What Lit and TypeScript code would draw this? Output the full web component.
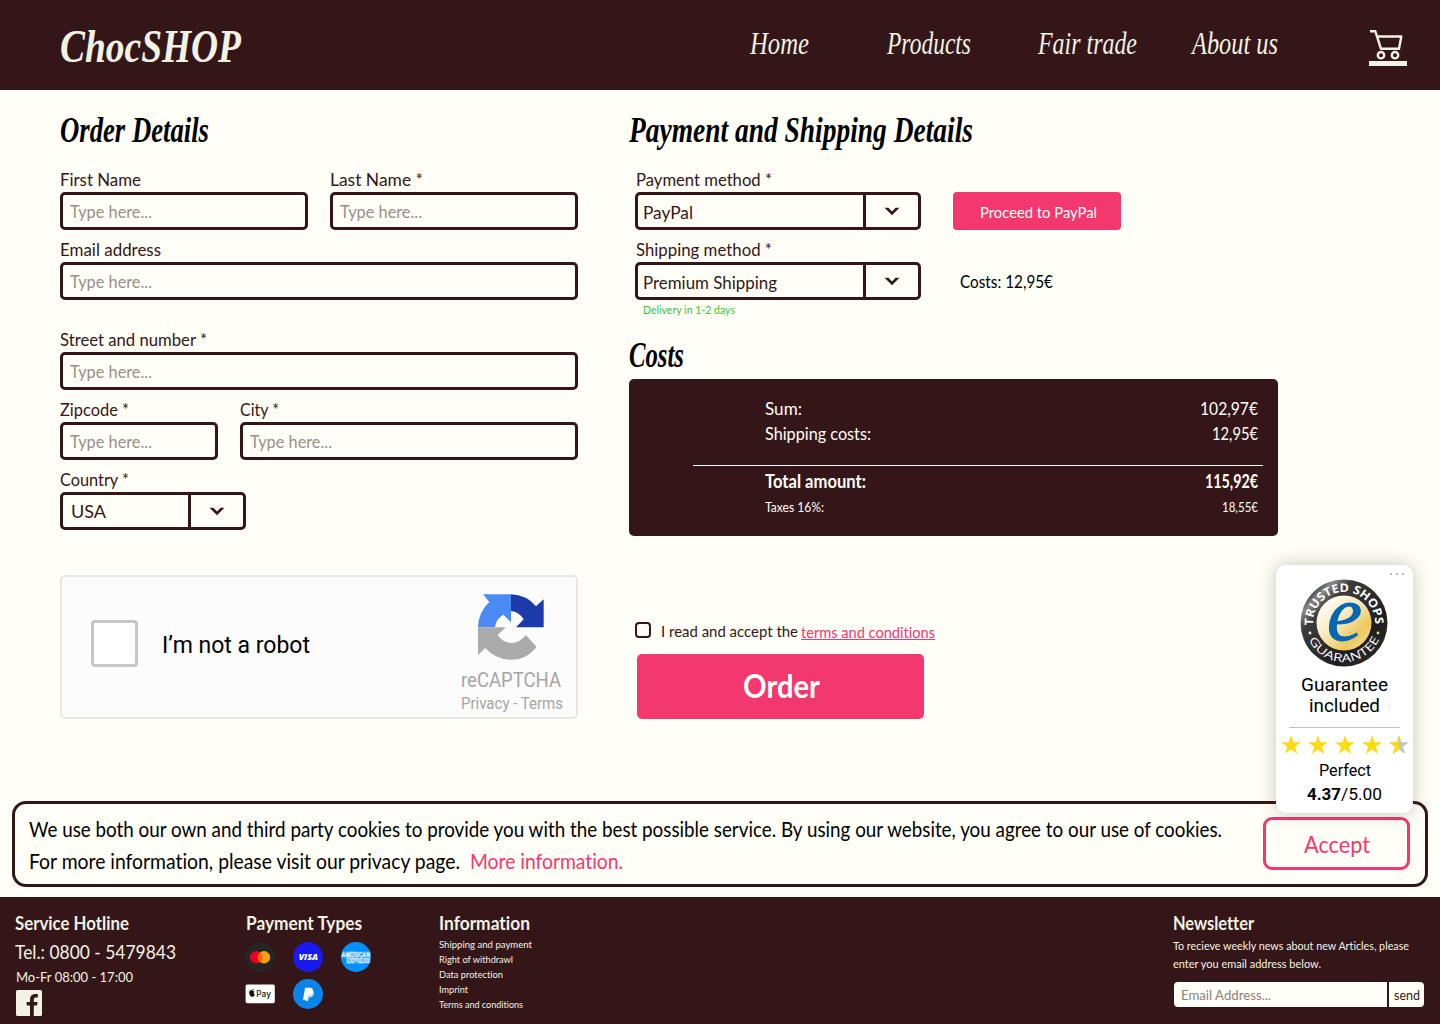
import { LitElement, html, css, svg } from "lit";
import { customElement, property, query } from "lit/decorators.js";
import { styleMap } from "lit/directives/style-map.js";

/** One line of text, set to a given measure. */
@customElement("fit-text")
class FitText extends LitElement {
  @property() text = "";
  @property({ type: Number }) measure = 0;
  @query("span") private line!: HTMLSpanElement;

  static styles = css`
    :host { display: block; flex: none; font-variant-ligatures: none; }
    span { display: inline-block; white-space: pre; transform-origin: 0 50%; vertical-align: top; }
  `;

  protected updated() {
    this.style.width = `${this.measure}px`;
    const natural = this.line.getBoundingClientRect().width;
    if (natural && this.line.style.transform === "") {
      this.line.style.transform = `scaleX(${this.measure / natural})`;
    }
  }

  render() {
    return html`<span>${this.text}</span>`;
  }
}

const fit = (text: string, measure: number, cls = "") =>
  html`<fit-text class=${cls} .text=${text} .measure=${measure}></fit-text>`;

const chevron = html`<svg class="chevron" width="16" height="9" viewBox="0 0 16 9">
  <path d="M.6.8H4.4L8 4.6 11.6.8h3.8L8 8.2z" fill="#341618" />
</svg>`;

@customElement("shop-field")
class ShopField extends LitElement {
  @property() label = "";
  @property({ type: Number }) labelWidth = 0;
  @property() value = "Type here...";
  @property({ type: Number }) valueWidth = 82;
  @property({ type: Boolean }) select = false;
  @property({ type: Boolean }) inset = false;

  static styles = css`
    :host { display: block; font: 18px/26px Lato, sans-serif; color: #341618; }
    .label { padding-top: 2px; }
    .shifted { padding-left: 1px; }
    .box { box-sizing: border-box; height: 38px; border: 3px solid #341618; border-radius: 5px; display: flex; line-height: 32px; }
    .value { flex: 1; padding-left: 7px; }
    .hint { color: #9c8d89; }
    .chosen { line-height: 33px; padding-left: 8px; }
    .tight { padding-left: 5px; line-height: 34px; }
    .arrow { box-sizing: border-box; width: 55px; border-left: 3px solid #341618; display: flex; align-items: center; justify-content: center; }
  `;

  render() {
    const kind = !this.select ? "hint" : this.inset ? "chosen" : "tight";
    return html`
      ${fit(this.label, this.labelWidth, kind === "tight" ? "label shifted" : "label")}
      <div class="box">
        <div class="value ${kind}">${fit(this.value, this.valueWidth)}</div>
        ${this.select ? html`<div class="arrow">${chevron}</div>` : ""}
      </div>`;
  }
}

const field = (label: string, labelWidth: number, cls = "") =>
  html`<shop-field class=${cls} .label=${label} .labelWidth=${labelWidth}></shop-field>`;

const select = (label: string, labelWidth: number, value: string, valueWidth: number, cls = "", inset = false) =>
  html`<shop-field class=${cls} select .label=${label} .labelWidth=${labelWidth}
    .value=${value} .valueWidth=${valueWidth} .inset=${inset}></shop-field>`;

const starPoints = "10,0 12.4,7.2 20,7.3 13.9,11.8 16.2,19 10,14.6 3.8,19 6.1,11.8 0,7.3 7.6,7.2";

@customElement("trust-card")
class TrustCard extends LitElement {
  static styles = css`
    :host { display: flex; flex-direction: column; align-items: center; box-sizing: border-box; width: 137px; height: 248px;
      background: #fff; border-radius: 10px; box-shadow: 0 0 18px rgba(60, 60, 40, .3); font: 19px/21px Roboto, sans-serif; color: #000; }
    .dots { align-self: flex-end; display: flex; gap: 4px; padding: 8px 9px 4px 0; }
    .dots i { width: 2px; height: 2px; background: #bbb; }
    .seal { display: block; overflow: visible; margin-right: 1px; }
    .name { display: flex; flex-direction: column; align-items: center; padding-top: 7px; }
    .rule { width: 111px; height: 1px; background: #bdbdbd; margin-top: 11px; }
    .stars { display: flex; gap: 7px; padding-top: 7px; }
    .small { font-size: 16px; line-height: 24px; }
    .first { padding: 4px 0 0 1px; }
    .score { display: flex; font-size: 17px; line-height: 23px; }
    .bold { font-weight: 700; }
  `;

  render() {
    return html`
      <div class="dots"><i></i><i></i><i></i></div>
      <svg class="seal" width="88" height="88" viewBox="-44 -44 88 88">
        <defs>
          <linearGradient id="rim" x1="0" y1="0" x2="1" y2="1">
            <stop offset="0" stop-color="#222" /><stop offset=".13" stop-color="#3a3a3a" />
            <stop offset=".2" stop-color="#8a8a8a" /><stop offset=".3" stop-color="#3c3c3c" />
            <stop offset=".7" stop-color="#1d1d1f" /><stop offset="1" stop-color="#333" />
          </linearGradient>
          <linearGradient id="gold" x1=".1" y1=".1" x2=".9" y2=".9">
            <stop offset="0" stop-color="#fff" /><stop offset=".4" stop-color="#fbeac0" />
            <stop offset=".8" stop-color="#eec75c" /><stop offset="1" stop-color="#f5dc95" />
          </linearGradient>
          <path id="upper" d="M-30.9 2.4A31 31 0 1 1 30.9 2.4" />
          <path id="lower" d="M-36.3 14A38.9 38.9 0 0 0 36.3 14" />
        </defs>
        <circle r="43.5" fill="url(#rim)" />
        <circle r="27.5" fill="url(#gold)" />
        <g fill="#fff" font-family="Open Sans, sans-serif">
          <text font-size="11.8" font-weight="700"><textPath href="#upper" textLength="101" lengthAdjust="spacingAndGlyphs">TRUSTED SHOPS</textPath></text>
          <text font-size="11.4"><textPath href="#lower" startOffset="3" textLength="88" lengthAdjust="spacingAndGlyphs">GUARANTEE</textPath></text>
        </g>
        <circle cx="-34" cy="10" r="1.4" fill="#eee" /><circle cx="34" cy="10" r="1.4" fill="#f3d95c" />
        <text x="-17" y="17.2" font-family="Liberation Serif, serif" font-style="italic" font-size="79" fill="#0068b3" stroke="#0068b3" stroke-width="1">e</text>
      </svg>
      <div class="name">${fit("Guarantee", 87)}${fit("included", 71)}</div>
      <div class="rule"></div>
      <div class="stars">
        ${[1, 1, 1, 1, 0.5].map((fill) => html`<svg width="20" height="20" viewBox="0 0 20 20">
          <polygon points=${starPoints} fill=${fill < 1 ? "#c3c3c3" : "#ffdc0f"} />
          ${fill < 1 ? svg`<path d="M10 0V14.6L3.8 19 6.1 11.8 0 7.3 7.6 7.2z" fill="#ffdc0f"/>` : ""}
        </svg>`)}
      </div>
      <div class="small first">${fit("Perfect", 52)}</div>
      <div class="score">${fit("4.37", 34, "bold")}${fit("/5.00", 41)}</div>`;
  }
}

@customElement("app-root")
class AppRoot extends LitElement {
  static styles = css`
    :host { display: flex; flex-direction: column; position: relative; width: 1440px; height: 1024px; overflow: hidden;
      background: #fffff7; color: #341618; font: 18px/28px Lato, sans-serif; }
    .script { font-family: "Liberation Serif", serif; font-style: italic; }
    header { height: 90px; box-sizing: border-box; background: #341618; color: #f1f2e4; display: flex; padding-left: 60px; }
    .logo { font-size: 46px; line-height: 93px; font-weight: 700; }
    nav { display: flex; margin-left: 509px; font-size: 31px; line-height: 88px; }
    .home { margin-right: 78px; }
    .products { margin-right: 67px; }
    .fair { margin-right: 55px; }
    .cart { margin: 28px 0 0 91px; }

    main { display: flex; height: 711px; }
    .order { width: 518px; padding: 22px 0 0 60px; }
    h2 { margin: 0; font-size: 35px; line-height: 38px; font-weight: 700; color: #000; }
    .order h2, .payment h2 { padding-bottom: 14px; }
    .row { display: flex; gap: 22px; }
    .grow { flex: 1; }
    .fields { display: flex; flex-direction: column; gap: 4px; }
    .email { margin-bottom: 20px; }
    .zip { width: 158px; }
    .country { width: 186px; }
    .captcha { box-sizing: border-box; height: 144px; margin-top: 45px; border: 2px solid #e7e7e6; border-radius: 5px; background: #fcfcfc;
      display: flex; font-family: Roboto, sans-serif; color: #000; }
    .captcha-box { box-sizing: border-box; width: 47px; height: 47px; margin: 43px 24px 0 29px; border: 3px solid #c6c6c6; border-radius: 4px; background: #fff; }
    .robot { font-size: 24px; line-height: 136px; }
    .brand { margin-left: auto; padding: 17px 13px 0 0; color: #a5a5a5; }
    .brand svg { display: block; margin-left: 17px; }
    .re { font-size: 21px; line-height: 30px; padding-top: 5px; }
    .privacy { font-size: 16px; line-height: 18px; }

    .payment { padding: 22px 0 0 51px; width: 649px; }
    .methods { display: flex; padding-left: 6px; gap: 32px; }
    .methods .fields { width: 286px; }
    .side { padding-top: 28px; }
    .pay { width: 168px; height: 38px; box-sizing: border-box; background: #f2386f; border-radius: 4px; color: #fffff7; font-size: 16px; line-height: 39px; padding-left: 27px; }
    .ship-cost { color: #000; line-height: 38px; padding: 32px 0 0 7px; }
    .delivery { font-size: 11px; line-height: 20px; color: #3cc432; padding-left: 14px; }
    .payment .costs-title { padding: 17px 0 4px; }
    .costs { box-sizing: border-box; height: 157px; background: #341618; border-radius: 5px; color: #fffff7; padding-top: 17px; }
    .line { display: flex; justify-content: space-between; padding: 0 20px 0 136px; line-height: 25px; }
    .rule { height: 1px; background: #fffff7; margin: 19px 15px 3px 64px; }
    .total { font-weight: 700; }
    .tax { font-size: 13px; line-height: 26px; }
    .terms { display: flex; align-items: center; padding: 81px 0 0 6px; font-size: 16px; line-height: 28px; }
    .check { box-sizing: border-box; width: 16px; height: 16px; border: 2px solid #341618; border-radius: 4px; margin: 0 10px 2px 0; }
    .link { color: #f2386f; margin-left: 3px; line-height: 17px; height: 16px; border-bottom: 1px solid #f2386f; }
    .submit { width: 287px; height: 65px; box-sizing: border-box; background: #f2386f; border-radius: 5px; color: #fffff7; margin: 9px 0 0 8px;
      font-size: 33px; line-height: 63px; font-weight: 700; padding-left: 106px; }

    .cookies { box-sizing: border-box; height: 86px; margin: 0 12px 10px; border: 3px solid #341618; border-radius: 14px; display: flex; justify-content: space-between;
      padding: 9px 15px 0 14px; color: #000; font-size: 21px; line-height: 32px; }
    .cookies .row { gap: 10px; }
    .pink { color: #f2386f; }
    .accept { box-sizing: border-box; width: 147px; height: 53px; margin-top: 4px; border: 3px solid #f2386f; border-radius: 9px; color: #f2386f; font-size: 23px; line-height: 49px; padding-left: 38px; }
    .trust { position: absolute; left: 1276px; top: 565px; }

    footer { height: 127px; background: #341618; color: #f1f2e4; display: flex; box-sizing: border-box; padding: 12px 16px 0 15px; }
    h3 { margin: 0; font-size: 19px; line-height: 28px; font-weight: 700; }
    .hotline { width: 231px; }
    .tel { font-size: 19px; line-height: 30px; }
    .hours { font-size: 14px; line-height: 20px; padding-left: 1px; }
    .fb { display: block; margin: 3px 0 0 1px; }
    .types { width: 193px; }
    .icons { display: grid; grid-template-columns: repeat(3, 30px); column-gap: 18px; row-gap: 7px; padding-top: 5px; margin-left: -1px; }
    .icons svg { display: block; }
    .info { font-size: 10px; line-height: 15px; }
    .news { margin-left: auto; width: 251px; font-size: 12px; line-height: 18px; }
    .mail { display: flex; gap: 2px; padding: 9px 0 0 1px; font-size: 14px; line-height: 25px; }
    .mail-input { width: 213px; box-sizing: border-box; padding-left: 7px; background: #fffff7; border-radius: 4px 0 0 4px; color: #8f7f7c; }
    .send { width: 35px; box-sizing: border-box; padding-left: 5px; background: #fffff7; border-radius: 0 4px 4px 0; color: #341618; }
  `;

  private header() {
    return html`<header>
      ${fit("ChocSHOP", 181, "script logo")}
      <nav class="script">
        ${fit("Home", 59, "home")}${fit("Products", 84, "products")}${fit("Fair trade", 99, "fair")}${fit("About us", 86)}
      </nav>
      <svg class="cart" width="38" height="38" viewBox="0 0 38 38" fill="none" stroke="#f1f2e4" stroke-width="2.4">
        <path d="M1 3.2H6.3L12 20.8H30L32.3 8.5H8" stroke-linejoin="round" />
        <circle cx="12" cy="27.2" r="3.2" /><circle cx="26" cy="27.2" r="3.2" />
        <path d="M0 35.5H38" stroke-width="5" />
      </svg>
    </header>`;
  }

  private order() {
    return html`<section class="order">
      <h2 class="script">${fit("Order Details", 149)}</h2>
      <div class="fields">
        <div class="row">${field("First Name", 81, "grow")}${field("Last Name *", 93, "grow")}</div>
        ${field("Email address", 101, "email")}
        ${field("Street and number *", 147)}
        <div class="row">${field("Zipcode *", 69, "zip")}${field("City *", 39, "grow")}</div>
        ${select("Country *", 69, "USA", 35, "country", true)}
      </div>
      <div class="captcha">
        <div class="captcha-box"></div>
        ${fit("I’m not a robot", 148, "robot")}
        <div class="brand">
          <svg width="66" height="66" viewBox="114 71 198 198">
            <path fill="#4a8af4" d="M129 72H213V156L190 133Q168 145 165 171H114Q115 125 148 95Z" />
            <path fill="#1c3aa9" d="M213 72Q260 74 288 108L311 87V171H228L251 147Q237 124 213 122Z" />
            <path fill="#ababab" d="M114 171H197L173 195Q190 218 215 218Q242 216 257 194L290 229Q260 268 213 268Q165 267 136 233L114 254Z" />
          </svg>
          ${fit("reCAPTCHA", 100, "re")}${fit("Privacy - Terms", 102, "privacy")}
        </div>
      </div>
    </section>`;
  }

  private payment() {
    return html`<section class="payment">
      <h2 class="script">${fit("Payment and Shipping Details", 344)}</h2>
      <div class="methods">
        <div class="fields">
          ${select("Payment method *", 136, "PayPal", 50)}
          ${select("Shipping method *", 136, "Premium Shipping", 134)}
        </div>
        <div class="side">
          <div class="pay">${fit("Proceed to PayPal", 117)}</div>
          <div class="ship-cost">${fit("Costs: 12,95€", 93)}</div>
        </div>
      </div>
      <div class="delivery">${fit("Delivery in 1-2 days", 92)}</div>
      <h2 class="script costs-title">${fit("Costs", 55)}</h2>
      <div class="costs">
        <div class="line">${fit("Sum:", 37)}${fit("102,97€", 58)}</div>
        <div class="line">${fit("Shipping costs:", 106)}${fit("12,95€", 46)}</div>
        <div class="rule"></div>
        <div class="line total">${fit("Total amount:", 101)}${fit("115,92€", 53)}</div>
        <div class="line tax">${fit("Taxes 16%:", 59)}${fit("18,55€", 36)}</div>
      </div>
      <div class="terms">
        <div class="check"></div>
        ${fit("I read and accept the", 137)}${fit("terms and conditions", 134, "link")}
      </div>
      <div class="submit">${fit("Order", 77)}</div>
    </section>`;
  }

  private cookies() {
    return html`<section class="cookies">
      <div>
        ${fit("We use both our own and third party cookies to provide you with the best possible service. By using our website, you agree to our use of cookies.", 1193)}
        <div class="row">
          ${fit("For more information, please visit our privacy page.", 431)}${fit("More information.", 153, "pink")}
        </div>
      </div>
      <div class="accept">${fit("Accept", 66)}</div>
    </section>`;
  }

  private paymentIcons() {
    return html`<div class="icons">
      <svg width="30" height="30" viewBox="0 0 30 30"><circle cx="15" cy="15" r="15" fill="#252525" />
        <circle cx="11.2" cy="15.3" r="6.2" fill="#eb001b" /><circle cx="19" cy="15.3" r="6.2" fill="#f79e1b" />
        <path d="M15.1 10.5a6.2 6.2 0 0 1 0 9.6a6.2 6.2 0 0 1 0-9.6z" fill="#ff5f00" /></svg>
      <svg width="30" height="30" viewBox="0 0 30 30"><circle cx="15" cy="15" r="15" fill="#1a1aec" />
        <text x="5.7" y="18.4" textLength="19.3" lengthAdjust="spacingAndGlyphs" fill="#fff" font-family="Open Sans, sans-serif" font-size="9" font-weight="800" font-style="italic">VISA</text></svg>
      <svg width="30" height="30" viewBox="0 0 30 30">
        <circle cx="15" cy="15" r="15" fill="#0690ff" />
        <g fill="#0690ff" stroke="#fff" stroke-width=".55" font-family="Liberation Sans, sans-serif" font-weight="700" font-size="6.8">
          <text x=".6" y="14.6" textLength="28.4" lengthAdjust="spacingAndGlyphs">AMERICAN</text>
          <text x="5.5" y="21.2" textLength="23.2" lengthAdjust="spacingAndGlyphs">EXPRESS</text>
        </g></svg>
      <svg width="30" height="30" viewBox="0 0 30 30"><rect x=".6" y="5.4" width="29.2" height="18.8" rx="1.6" fill="#fff" />
        <path d="M8.7 11.2q-1.2-.7-2.5-.2-2 .1-2.1 2.6.1 2.6 2 4.1.6.2 1.2-.2.6.4 1.3.1.9-.8 1.2-2-1.8-.9-.4-3.1-.8-1-2.2-.6.1-1.8 1.5-2.1.1 1-.9 1.7z" fill="#111" />
        <text x="11.3" y="17.6" textLength="14.6" lengthAdjust="spacingAndGlyphs" fill="#111" font-family="Inter, sans-serif" font-size="8.8" font-weight="500">Pay</text></svg>
      <svg width="30" height="30" viewBox="0 0 30 30"><circle cx="15" cy="15" r="15" fill="#0a84e8" />
        <path d="M14 11H18.8Q21.6 11.8 20.9 15Q20 18.5 16 18.5L15.2 22H12z" fill="#b8d9f5" />
        <path d="M12.1 8.8H17.5Q20.6 9.6 19.9 12.8Q19 16.7 14.7 16.5L13.7 20.7H10z" fill="#fff" /></svg>
    </div>`;
  }

  render() {
    return html`
      ${this.header()}
      <main>${this.order()}${this.payment()}</main>
      ${this.cookies()}
      <footer>
        <div class="hotline">
          <h3>${fit("Service Hotline", 114)}</h3>
          ${fit("Tel.: 0800 - 5479843", 161, "tel")}
          <div class="hours">${fit("Mo-Fr 08:00 - 17:00", 117)}</div>
          <svg class="fb" width="26" height="26" viewBox="0 0 26 26"><rect width="26" height="26" rx="1.5" fill="#f1f2e4" />
            <path d="M14 26V15.5H10.7V12H14V9.2Q14.2 4.2 19 4H21.8V7.6H19.8Q17.8 7.7 17.8 9.6V12H21.6L21 15.5H17.8V26z" fill="#341618" /></svg>
        </div>
        <div class="types"><h3>${fit("Payment Types", 116)}</h3>${this.paymentIcons()}</div>
        <div class="info">
          <h3>${fit("Information", 91)}</h3>
          ${fit("Shipping and payment", 93)}${fit("Right of withdrawl", 74)}${fit("Data protection", 64)}${fit("Imprint", 29)}${fit("Terms and conditions", 84)}
        </div>
        <div class="news">
          <h3>${fit("Newsletter", 81)}</h3>
          ${fit("To recieve weekly news about new Articles, please", 236)}${fit("enter you email address below.", 148)}
          <div class="mail"><div class="mail-input">${fit("Email Address...", 90)}</div><div class="send">${fit("send", 26)}</div></div>
        </div>
      </footer>
      <trust-card class="trust"></trust-card>`;
  }
}
